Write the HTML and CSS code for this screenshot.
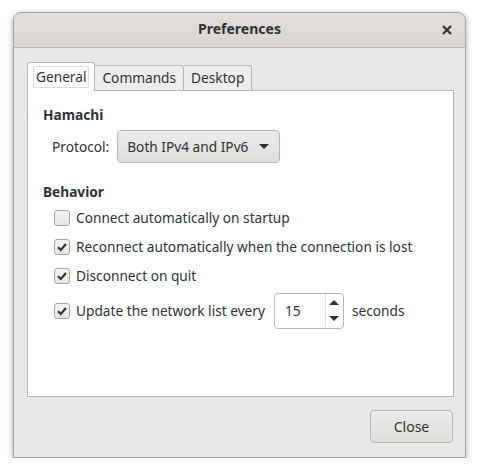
FILE: index.html
```html
<!DOCTYPE html>
<html>
<head>
<meta charset="utf-8">
<link rel="stylesheet" href="styles.css">
</head>
<body>
<div class="window">
  <div class="titlebar">
    <span class="title">Preferences</span>
    <span class="close-x">
      <svg width="10" height="10" viewBox="0 0 10 10"><path d="M1 1L9 9M9 1L1 9" stroke="#2e3436" stroke-width="2.2"/></svg>
    </span>
  </div>
  <div class="body">
    <div class="notebook">
      <div class="tabs">
        <div class="tab active"><span class="tab-inner">General</span></div>
        <div class="tab">Commands</div>
        <div class="tab">Desktop</div>
      </div>
      <div class="page">
        <div class="heading">Hamachi</div>
        <div class="proto-row">
          <span class="label">Protocol:</span>
          <div class="combo">
            <span>Both IPv4 and IPv6</span>
            <svg width="10" height="6" viewBox="0 0 10 6"><path d="M0 0H10L5 5Z" fill="#2e3436"/></svg>
          </div>
        </div>
        <div class="heading heading2">Behavior</div>
        <div class="checks">
          <div class="check-row"><span class="cb"></span><span>Connect automatically on startup</span></div>
          <div class="check-row"><span class="cb on"><svg width="12" height="12" viewBox="0 0 12 12"><path d="M2 6.2L4.8 9L10 3" fill="none" stroke="#2e3436" stroke-width="2.2"/></svg></span><span>Reconnect automatically when the connection is lost</span></div>
          <div class="check-row"><span class="cb on"><svg width="12" height="12" viewBox="0 0 12 12"><path d="M2 6.2L4.8 9L10 3" fill="none" stroke="#2e3436" stroke-width="2.2"/></svg></span><span>Disconnect on quit</span></div>
          <div class="check-row spin-row"><span class="cb on"><svg width="12" height="12" viewBox="0 0 12 12"><path d="M2 6.2L4.8 9L10 3" fill="none" stroke="#2e3436" stroke-width="2.2"/></svg></span><span>Update the network list every</span>
            <div class="spin">
              <span class="spin-val">15</span>
              <div class="spin-btns">
                <span class="sb"><svg width="10" height="6" viewBox="0 0 10 6"><path d="M0 6H10L5 1Z" fill="#2e3436"/></svg></span>
                <span class="sb"><svg width="10" height="6" viewBox="0 0 10 6"><path d="M0 0H10L5 5Z" fill="#2e3436"/></svg></span>
              </div>
            </div>
            <span>seconds</span>
          </div>
        </div>
      </div>
    </div>
    <div class="actions">
      <button class="btn">Close</button>
    </div>
  </div>
</div>
</body>
</html>
```
FILE: styles.css
```css
html, body {
  margin: 0;
  padding: 0;
  background: #ffffff;
}
body {
  font-family: "Noto Sans", "Open Sans", sans-serif;
  font-size: 13.7px;
  color: #2e3436;
}
.window {
  margin: 12px 0 0 13px;
  width: 453px;
  height: 446px;
  box-sizing: border-box;
  border: 1px solid #a5a5a2;
  border-radius: 8px 8px 0 0;
  background: #e8e8e7;
  box-shadow: 0 2px 6px rgba(0,0,0,0.35);
  display: flex;
  flex-direction: column;
  overflow: hidden;
}
.titlebar {
  height: 35px;
  box-sizing: border-box;
  padding-bottom: 3px;
  flex: none;
  background: linear-gradient(#e1dedb, #dad6d2);
  border-bottom: 1px solid #bfb8b1;
  display: flex;
  align-items: center;
  justify-content: center;
  position: relative;
}
.title {
  font-weight: bold;
  font-size: 14px;
  color: #2e3436;
}
.close-x {
  position: absolute;
  right: 13px;
  top: 12px;
  width: 10px;
  height: 10px;
  display: flex;
}
.body {
  flex: 1;
  display: flex;
  flex-direction: column;
  padding: 13px 11px 14px 13px;
}
.notebook {
  flex: 1;
  display: flex;
  flex-direction: column;
}
.tabs {
  display: flex;
  align-items: flex-end;
  height: 29px;
}
.tab {
  height: 25px;
  box-sizing: border-box;
  padding: 0 7px 2px;
  border: 1px solid #b6b6b3;
  border-bottom: none;
  border-left: none;
  background: #ededec;
  display: flex;
  align-items: center;
  border-radius: 0 3px 0 0;
  color: #2e3436;
}
.tab.active {
  height: 29px;
  background: #ffffff;
  border-left: 1px solid #b6b6b3;
  border-radius: 3px 3px 0 0;
  padding: 3px 5px 0;
  position: relative;
  top: 1px;
  align-items: flex-start;
}
.tab-inner {
  border: 1px solid #dcdcda;
  border-radius: 2px;
  padding: 0 2px 1px;
  height: 22px;
  box-sizing: border-box;
  display: flex;
  align-items: center;
}
.page {
  flex: 1;
  background: #ffffff;
  border: 1px solid #b6b6b3;
  padding: 14px 15px;
}
.heading {
  font-weight: bold;
  line-height: 20px;
}
.heading2 {
  margin-top: 19px;
}
.proto-row {
  display: flex;
  align-items: center;
  margin-top: 5px;
  padding-left: 9px;
  gap: 8px;
}
.label {
  color: #2e3436;
}
.combo {
  width: 163px;
  height: 33px;
  box-sizing: border-box;
  border: 1px solid #b6b6b3;
  border-radius: 4px;
  background: linear-gradient(#edebe9, #e0dedb);
  display: flex;
  align-items: center;
  justify-content: space-between;
  padding: 0 10px 0 9px;
}
.checks {
  display: flex;
  flex-direction: column;
  padding-left: 11px;
  margin-top: 1px;
}
.check-row {
  display: flex;
  align-items: center;
  height: 29px;
  gap: 6px;
}
.spin-row {
  height: 41px;
  margin-top: 0;
}
.cb {
  width: 14px;
  height: 14px;
  border: 1px solid #a6a6a3;
  border-radius: 3px;
  background: linear-gradient(#f4f4f3, #e6e6e4);
  display: flex;
  align-items: center;
  justify-content: center;
  flex: none;
}
.spin {
  width: 70px;
  height: 36px;
  box-sizing: border-box;
  border: 1px solid #b6b6b3;
  border-radius: 4px;
  background: #ffffff;
  display: flex;
  margin: 0 2px 0 3px;
}
.spin-val {
  flex: 1;
  display: flex;
  align-items: center;
  padding-left: 10px;
}
.spin-btns {
  width: 17px;
  border-left: 1px solid #e0e0de;
  display: flex;
  flex-direction: column;
}
.sb {
  flex: 1;
  display: flex;
  align-items: center;
  justify-content: center;
}
.actions {
  display: flex;
  justify-content: flex-end;
  margin-top: 13px;
  padding-right: 1px;
}
.btn {
  width: 83px;
  height: 33px;
  font-family: inherit;
  font-size: 14px;
  color: #2e3436;
  border: 1px solid #b6b6b3;
  border-radius: 4px;
  background: linear-gradient(#edebe9, #dfddda);
}
```
